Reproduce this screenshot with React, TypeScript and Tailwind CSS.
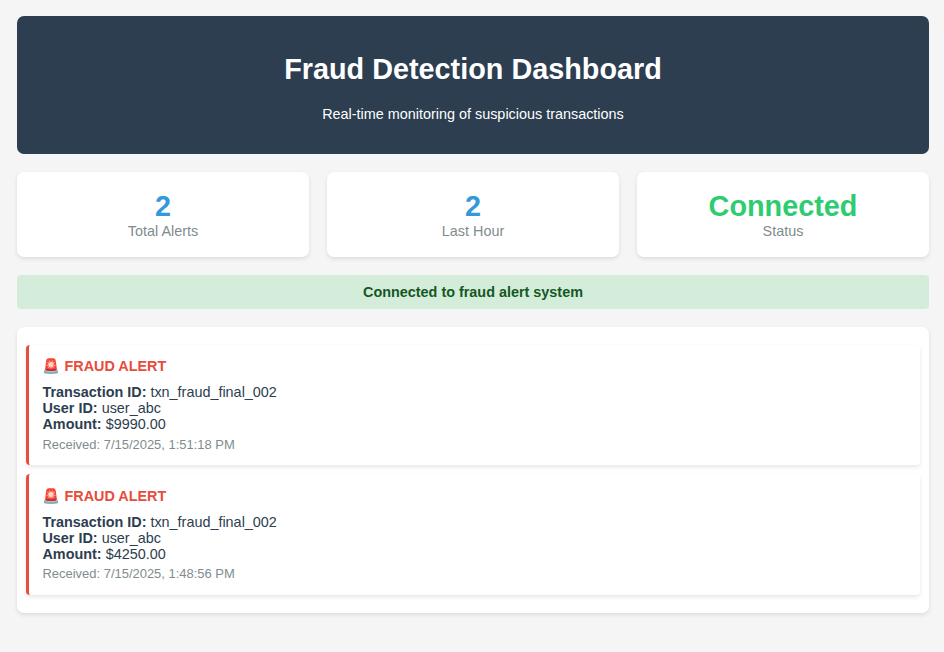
const stats = [
  { value: "2", label: "Total Alerts", color: "text-[#3498db]" },
  { value: "2", label: "Last Hour", color: "text-[#3498db]" },
  { value: "Connected", label: "Status", color: "text-[#2ecc71]" },
];

const alerts = [
  { id: "txn_fraud_final_002", user: "user_abc", amount: "$9990.00", time: "7/15/2025, 1:51:18 PM" },
  { id: "txn_fraud_final_002", user: "user_abc", amount: "$4250.00", time: "7/15/2025, 1:48:56 PM" },
];

export default function App() {
  return (
    <div className="min-h-screen bg-[#f5f5f5] pt-4 pl-[17px] pr-[15px] font-['Liberation_Sans',Arial,sans-serif] text-[14.4px] leading-4 text-[#2c3e50]">
      <header className="flex h-[138px] flex-col items-center rounded-[7px] bg-[#2c3e50] pt-[37px] text-white">
        <h1 className="text-[28.8px] leading-8 font-bold">Fraud Detection Dashboard</h1>
        <p className="mt-[21px]">Real-time monitoring of suspicious transactions</p>
      </header>
      <section className="mt-[18px] grid grid-cols-3 gap-[18px]">
        {stats.map((s) => (
          <div key={s.label} className="h-[85px] rounded-[7px] bg-white pt-[18px] text-center shadow-[0_2px_4px_rgba(0,0,0,0.1)]">
            <div className={`text-[28.8px] leading-[33px] font-bold ${s.color}`}>{s.value}</div>
            <div className="text-[#7f8c8d]">{s.label}</div>
          </div>
        ))}
      </section>
      <div className="mt-[18px] h-[34px] rounded-[4px] bg-[#d4edda] pt-[9px] text-center font-bold text-[#155724]">
        Connected to fraud alert system
      </div>
      <main className="mt-[18px] h-[286px] rounded-[7px] bg-white px-[9px] pt-[18px] shadow-[0_2px_4px_rgba(0,0,0,0.1)]">
        {alerts.map((a) => (
          <article key={a.time} className="mb-[9px] h-[120.4px] rounded-[4px] border-l-[3px] border-[#e74c3c] bg-white pt-[13.4px] pl-[13.47px] shadow-[0_2px_4px_rgba(0,0,0,0.1)]">
            <h2 className="mb-[9px] h-[17px] leading-[17px] font-bold text-[#e74c3c]">🚨 FRAUD ALERT</h2>
            <p><strong>Transaction ID:</strong> {a.id}</p>
            <p><strong>User ID:</strong> {a.user}</p>
            <p><strong>Amount:</strong> {a.amount}</p>
            <time className="mt-[4.4px] block text-[12.96px] text-[#7f8c8d]">Received: {a.time}</time>
          </article>
        ))}
      </main>
    </div>
  );
}
